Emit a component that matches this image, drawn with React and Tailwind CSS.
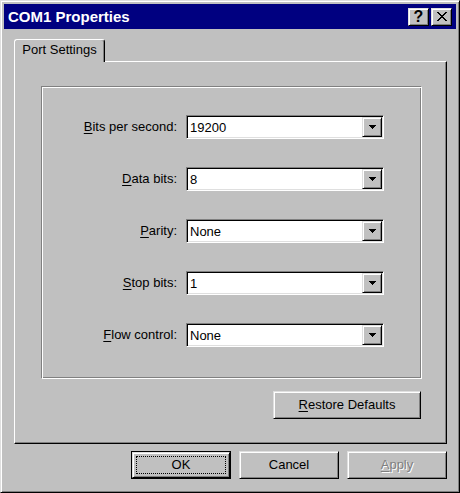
import React from 'react';

const raised =
  'bg-[#c0c0c0] border border-t-[#dfdfdf] border-l-[#dfdfdf] border-r-black border-b-black shadow-[inset_1px_1px_#fff,inset_-1px_-1px_#808080]';

function Key({ children }) {
  return <span className="underline underline-offset-[2px] decoration-1">{children}</span>;
}

function Combo({ value }) {
  return (
    <div className="w-[198px] h-[24px] flex items-center bg-white border border-t-[#808080] border-l-[#808080] border-r-white border-b-white shadow-[inset_1px_1px_#000,inset_-1px_-1px_#dfdfdf] p-[1px]">
      <span className="flex-1 pl-[2px] text-[13px] leading-none text-black">{value}</span>
      <div className={`${raised} w-[20px] h-[20px] flex items-center justify-center`}>
        <svg width="7" height="4" viewBox="0 0 7 4" shapeRendering="crispEdges">
          <path d="M0 0h7v1H0zM1 1h5v1H1zM2 2h3v1H2zM3 3h1v1H3z" fill="#000" />
        </svg>
      </div>
    </div>
  );
}

function Row({ label, hot, value }) {
  return (
    <div className="flex items-center">
      <div className="w-[136px] text-right text-[13px] text-black pr-[1px]">
        <Key>{hot}</Key>
        {label}
      </div>
      <div className="ml-[8px]">
        <Combo value={value} />
      </div>
    </div>
  );
}

function Button({ children, isDefault, disabled, className = '' }) {
  if (isDefault) {
    return (
      <div className={`w-[100px] h-[28px] border border-black ${className}`}>
        <div className={`${raised} w-full h-full flex items-center justify-center p-[3px]`}>
          <div className="w-full h-full border border-dotted border-black flex items-center justify-center text-[13px] text-black">
            {children}
          </div>
        </div>
      </div>
    );
  }
  return (
    <div
      className={`${raised} h-[28px] flex items-center justify-center text-[13px] ${
        disabled ? 'text-[#808080] [text-shadow:1px_1px_0_#fff]' : 'text-black'
      } ${className}`}
    >
      {children}
    </div>
  );
}

function App() {
  const rows = [
    { hot: 'B', label: 'its per second:', value: '19200' },
    { hot: 'D', label: 'ata bits:', value: '8' },
    { hot: 'P', label: 'arity:', value: 'None' },
    { hot: 'S', label: 'top bits:', value: '1' },
    { hot: 'F', label: 'low control:', value: 'None' },
  ];

  return (
    <div
      className="w-[460px] h-[493px] flex flex-col bg-[#c0c0c0] border border-t-[#dfdfdf] border-l-[#dfdfdf] border-r-black border-b-black shadow-[inset_1px_1px_#fff,inset_-1px_-1px_#808080] p-[3px] select-none"
      style={{ fontFamily: '"Liberation Sans", Arial, sans-serif' }}
    >
      {/* Title bar */}
      <div className="h-[25px] bg-[#000080] flex items-center pl-[4px] pr-[4px]">
        <div className="flex-1 text-white font-bold text-[15px] leading-none">COM1 Properties</div>
        <div className="flex items-center gap-[2px]">
          <div className={`${raised} w-[21px] h-[18px] flex items-center justify-center text-black font-black text-[16px] leading-none`}>
            ?
          </div>
          <div className={`${raised} w-[21px] h-[18px] flex items-center justify-center`}>
            <svg width="10" height="9" viewBox="0 0 10 9" shapeRendering="crispEdges">
              <path
                d="M0 0h2v1h1v1h1v1h2V2h1V1h1V0h2v1H9v1H8v1H7v1H6v1h1v1h1v1h1v1h1v1H8V8H7V7H6V6H4v1H3v1H2v1H0V8h1V7h1V6h1V5h1V4H3V3H2V2H1V1H0z"
                fill="#000"
              />
            </svg>
          </div>
        </div>
      </div>

      {/* Body */}
      <div className="flex flex-col pl-[10px] pr-[9px] pt-[10px]">
        {/* Tab strip */}
        <div className="flex">
          <div className="relative z-10 -mb-px h-[23px] w-[91px] bg-[#c0c0c0] border-l border-t border-white border-r border-r-black rounded-t-[3px] shadow-[inset_-1px_0_#808080] flex items-center justify-center text-[13px] text-black pb-[2px]">
            Port Settings
          </div>
        </div>

        {/* Tab page */}
        <div className="h-[383px] flex flex-col border border-t-white border-l-white border-r-black border-b-black shadow-[inset_-1px_-1px_#808080] pl-[26px] pr-[24px] pt-[24px]">
          <div className="h-[293px] border border-t-[#808080] border-l-[#808080] border-r-white border-b-white shadow-[inset_1px_1px_#fff,inset_-1px_-1px_#808080] pt-[28px] flex flex-col gap-[28px]">
            {rows.map((r) => (
              <Row key={r.label} hot={r.hot} label={r.label} value={r.value} />
            ))}
          </div>
          <div className="flex justify-end mt-[12px] pr-px">
            <Button className="w-[148px]">
              <Key>R</Key>estore Defaults
            </Button>
          </div>
        </div>

        {/* Dialog buttons */}
        <div className="flex justify-end gap-[8px] mt-[7px]">
          <Button isDefault>OK</Button>
          <Button className="w-[100px]">Cancel</Button>
          <Button className="w-[100px]" disabled>
            <Key>A</Key>pply
          </Button>
        </div>
      </div>
    </div>
  );
}

export default App;
